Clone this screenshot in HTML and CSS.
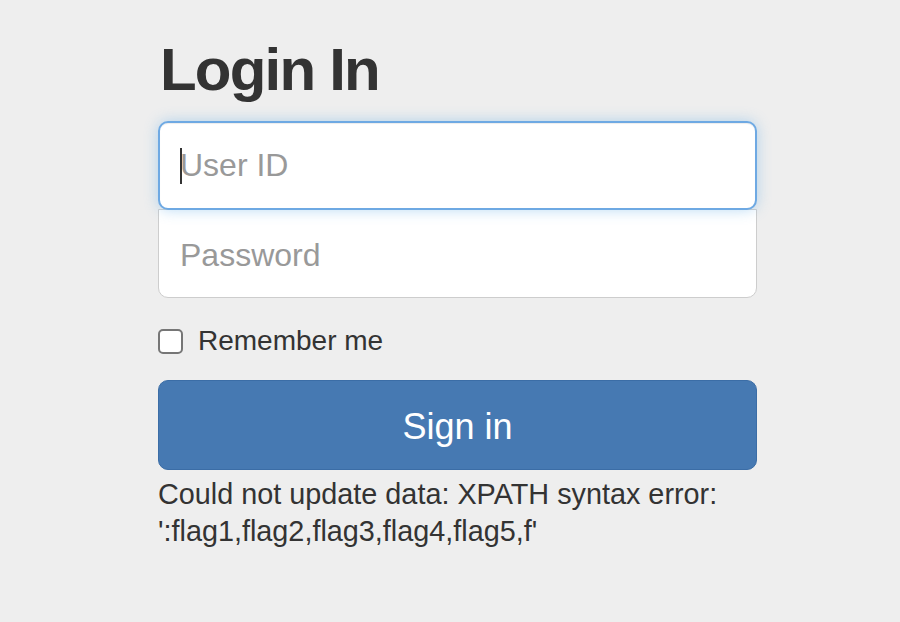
FILE: index.html
```html
<!DOCTYPE html>
<html>
<head>
<meta charset="utf-8">
<title>Login In</title>
<link rel="stylesheet" href="styles.css">
</head>
<body>
<div class="page">
  <form class="form-signin">
    <h2 class="form-heading">Login In</h2>
    <div class="field field-top"><span class="caret"></span><span class="placeholder">User ID</span></div>
    <div class="field field-bottom"><span class="placeholder">Password</span></div>
    <label class="remember"><span class="check"></span><span>Remember me</span></label>
    <div class="btn-signin">Sign in</div>
    <p class="error">Could not update data: XPATH syntax error: ':flag1,flag2,flag3,flag4,flag5,f'</p>
  </form>
</div>
</body>
</html>
```

FILE: styles.css
```css
html, body {
  margin: 0;
  padding: 0;
  background: #eeeeee;
  font-family: "Liberation Sans", Arial, Helvetica, sans-serif;
  color: #333333;
}

.page {
  padding-top: 37px;
  padding-left: 158px;
}

.form-signin {
  width: 599px;
  display: flex;
  flex-direction: column;
}

.form-heading {
  margin: 0 0 18px 2px;
  font-size: 60px;
  line-height: 66px;
  font-weight: 700;
  letter-spacing: -1.8px;
  color: #333333;
}

.field {
  box-sizing: border-box;
  height: 89px;
  background: #ffffff;
  border: 1px solid #cccccc;
  display: flex;
  align-items: center;
  padding: 0 21px;
  font-size: 32px;
  position: relative;
}

.field-top {
  border: 2px solid #6ea9e3;
  padding: 0 20px 1px 20px;
  border-radius: 10px;
  margin-bottom: -1px;
  box-shadow: inset 0 1px 1px rgba(0,0,0,.075), 0 0 14px rgba(102,175,233,.45);
  z-index: 2;
}

.field-bottom {
  border-radius: 0 0 10px 10px;
  border-color: #cdcdcd;
  padding-top: 3px;
  margin-bottom: 23px;
}

.placeholder {
  color: #999999;
}

.caret {
  position: absolute;
  left: 20px;
  top: 25px;
  width: 2px;
  height: 36px;
  background: #333333;
}

.remember {
  display: flex;
  align-items: center;
  height: 40px;
  font-size: 28px;
  line-height: 40px;
  margin-bottom: 19px;
}

.check {
  box-sizing: border-box;
  width: 25px;
  height: 25px;
  border: 2px solid #767676;
  border-radius: 5px;
  background: #ffffff;
  margin-right: 15px;
}

.btn-signin {
  box-sizing: border-box;
  height: 90px;
  padding-top: 3px;
  background: #4679b2;
  border: 1px solid #3b6da6;
  border-radius: 10px;
  color: #ffffff;
  font-size: 36px;
  display: flex;
  align-items: center;
  justify-content: center;
}

.error {
  margin: 6px 0 0 0;
  font-size: 28.8px;
  line-height: 37px;
  color: #333333;
  width: 598px;
}
```
